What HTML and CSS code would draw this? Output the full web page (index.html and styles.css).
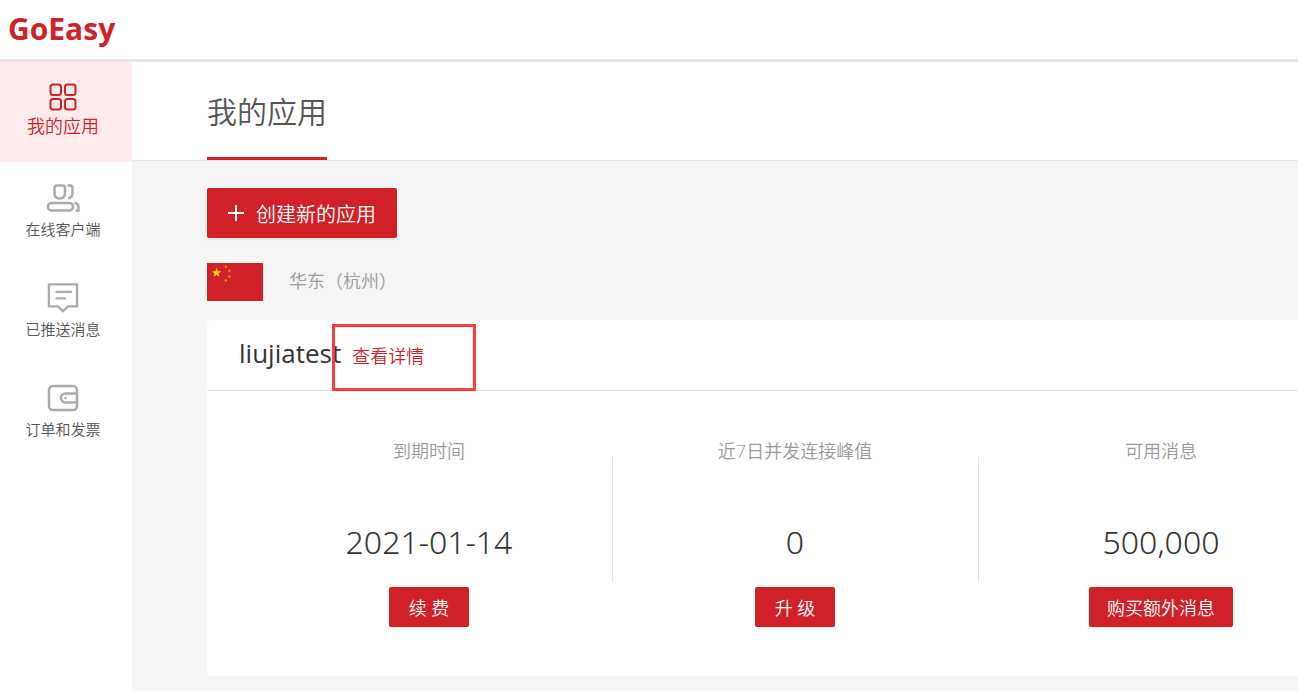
FILE: index.html
```html
<!DOCTYPE html>
<html lang="zh-CN">
<head>
    <meta charset="utf-8">
    <title>GoEasy</title>
    <link rel="stylesheet" href="styles.css">
</head>
<body>
<header class="header">
    <a class="logo" href="#">GoEasy</a>
</header>
<div class="container">
    <nav class="sidebar">
        <a class="menu active" href="#">
            <svg width="34" height="30" viewBox="0 0 34 30">
                <rect x="4.5" y="2.500" width="10.5" height="10.5" rx="2.5"/>
                <rect x="19" y="2.500" width="10.5" height="10.5" rx="2.5"/>
                <rect x="4.5" y="17" width="10.5" height="10.5" rx="2.5"/>
                <rect x="19" y="17" width="10.5" height="10.5" rx="2.5"/>
            </svg>
            <span>我的应用</span>
        </a>
        <a class="menu" href="#">
            <svg width="34" height="30" viewBox="0 0 34 30">
                <path d="M11 3.500h5.500q2.500 0 2.500 2.500v5q0 5.500-5.300 5.500T8.500 11V6q0-2.500 2.500-2.500z"/>
                <path d="M21.500 3.500h3q2 0 2 2.500v5q0 4.500-4.500 5.500"/>
                <rect x="2" y="21" width="25" height="7.500" rx="3.500"/>
                <path d="M28.500 21q4 .5 4 4v3.500h-3"/>
            </svg>
            <span>在线客户端</span>
        </a>
        <a class="menu" href="#">
            <svg width="34" height="32" viewBox="0 0 34 32">
                <path d="M2 2.500h30V26h-9.500L17 31l-5.500-5H2z"/>
                <path d="M10 10.500h15.500M10 17.500h9" stroke-linecap="round"/>
            </svg>
            <span>已推送消息</span>
        </a>
        <a class="menu" href="#">
            <svg width="34" height="30" viewBox="0 0 34 30">
                <rect x="3" y="4" width="28" height="24" rx="4"/>
                <path d="M31 11.500H19.500a4.500 4.500 0 0 0 0 9H31"/>
                <circle class="dot" cx="19.500" cy="16" r="1.200"/>
            </svg>
            <span>订单和发票</span>
        </a>
    </nav>
    <main class="main">
        <div class="title">
            <h1>我的应用</h1>
        </div>
        <div class="content">
            <button class="btn create" type="button">
                <svg width="16" height="16" viewBox="0 0 16 16"><path d="M8 0v16M0 8h16"/></svg>
                <span>创建新的应用</span>
            </button>
            <div class="region">
                <svg width="56" height="38" viewBox="0 0 56 38">
                    <defs>
                        <polygon id="star" points="0,-5 1.200,-1.600 4.800,-1.500 1.900,.6 2.900,4 0,2 -2.900,4 -1.900,.6 -4.800,-1.500 -1.200,-1.600"/>
                    </defs>
                    <rect class="flag" width="56" height="38"/>
                    <g fill="#fd0">
                        <use href="#star" transform="translate(9.500 9.800)"/>
                        <g fill="#e99a12">
                            <use href="#star" transform="translate(18.800 3.800) scale(.4)"/>
                            <use href="#star" transform="translate(22.500 7.800) scale(.4)"/>
                            <use href="#star" transform="translate(22.500 13.500) scale(.4)"/>
                            <use href="#star" transform="translate(18.800 17.500) scale(.4)"/>
                        </g>
                    </g>
                </svg>
                <span>华东（杭州）</span>
            </div>
            <section class="card">
                <div class="card-head">
                    <h2>liujiatest</h2>
                    <a class="detail" href="#">查看详情</a>
                </div>
                <div class="card-body">
                    <div class="col">
                        <p class="label">到期时间</p>
                        <p class="value">2021-01-14</p>
                        <button class="btn" type="button">续 费</button>
                    </div>
                    <div class="col">
                        <p class="label">近7日并发连接峰值</p>
                        <p class="value">0</p>
                        <button class="btn" type="button">升 级</button>
                    </div>
                    <div class="col">
                        <p class="label">可用消息</p>
                        <p class="value">500,000</p>
                        <button class="btn" type="button">购买额外消息</button>
                    </div>
                </div>
            </section>
        </div>
    </main>
</div>
</body>
</html>
```

FILE: styles.css
```css
* {
    margin: 0;
    padding: 0;
    box-sizing: border-box;
}
body {
    min-height: 100vh;
    display: flex;
    flex-direction: column;
    background: #fff;
    color: #333;
    font-family: "Open Sans", "Noto Sans CJK SC", sans-serif;
    font-weight: 350;
}
a {
    text-decoration: none;
}
.header {
    height: 62px;
    padding: 0 8px;
    border-bottom: 3px solid #e4e4e4;
}
.logo {
    line-height: 58px;
    font-size: 30px;
    font-weight: 700;
    color: #d02129;
}
.container {
    flex: 1;
    display: flex;
}
.sidebar {
    flex: 0 0 132px;
}
.menu {
    height: 100px;
    padding: 20px 6px 0 0;
    display: flex;
    flex-direction: column;
    align-items: center;
    font-size: 15px;
    line-height: 34px;
    color: #555;
}
.menu svg {
    flex: none;
    height: 30px;
    overflow: visible;
    fill: none;
    stroke: #aaa;
    stroke-width: 2.5;
}
.menu .dot {
    fill: #aaa;
    stroke: none;
}
.menu.active {
    background: #ffebec;
    color: #d02129;
    font-size: 18px;
    line-height: 28px;
}
.menu.active svg {
    stroke: #d02129;
    stroke-width: 2;
}
.main {
    flex: 1;
    min-width: 0;
    overflow: hidden;
    background: #f5f5f5;
}
.title {
    height: 99px;
    padding-left: 75px;
    display: flex;
    background: #fff;
    border-bottom: 1px solid #e4e4e4;
}
.title h1 {
    border-bottom: 3px solid #d02129;
    line-height: 100px;
    font-size: 30px;
    font-weight: 350;
    color: #555;
}
.content {
    padding: 27px 0 15px 75px;
}
.btn {
    min-width: 80px;
    height: 40px;
    padding: 0 18px;
    border: 0;
    border-radius: 2px;
    background: #d02129;
    box-shadow: 0 2px 2px rgba(0, 0, 0, .06);
    color: #fff;
    font-family: inherit;
    font-size: 18px;
    font-weight: 350;
    cursor: pointer;
}
.create {
    height: 50px;
    padding: 0 21px;
    display: flex;
    align-items: center;
    gap: 12px;
    font-size: 20px;
}
.create svg {
    stroke: #fff;
    stroke-width: 2;
}
.region {
    margin: 25px 0 19px;
    display: flex;
    gap: 26px;
    font-size: 18px;
    line-height: 36px;
    color: #999;
}
.flag {
    fill: #d02129;
}
/* three wide columns, the rest is cut on narrow screens */
.card {
    min-width: 1176px;
    border-radius: 5px;
    background: #fff;
}
.card-head {
    height: 71px;
    padding-left: 32px;
    display: flex;
    gap: 11px;
    border-bottom: 1px solid #e4e4e4;
}
.card-head h2 {
    font-size: 26px;
    line-height: 66px;
    font-weight: 400;
}
.detail {
    position: relative;
    font-size: 18px;
    line-height: 72px;
    color: #d02129;
}
.detail::after {
    content: "";
    position: absolute;
    top: 4px;
    left: -20px;
    box-sizing: border-box;
    width: 144px;
    height: 67px;
    border: 3px solid #ff3b3b;
}
.card-body {
    padding: 42px 39px 49px;
    display: grid;
    grid-template-columns: repeat(3, 1fr);
}
.col {
    position: relative;
    display: flex;
    flex-direction: column;
    align-items: center;
}
.col + .col::before {
    content: "";
    position: absolute;
    left: 0;
    top: 24px;
    height: 125px;
    border-left: 1px solid #e4e4e4;
}
.label {
    line-height: 36px;
    font-size: 18px;
    color: #999;
}
.value {
    margin: 50px 0 22px;
    line-height: 46px;
    font-family: "Noto Sans", "Open Sans", sans-serif;
    font-size: 32px;
}
```
